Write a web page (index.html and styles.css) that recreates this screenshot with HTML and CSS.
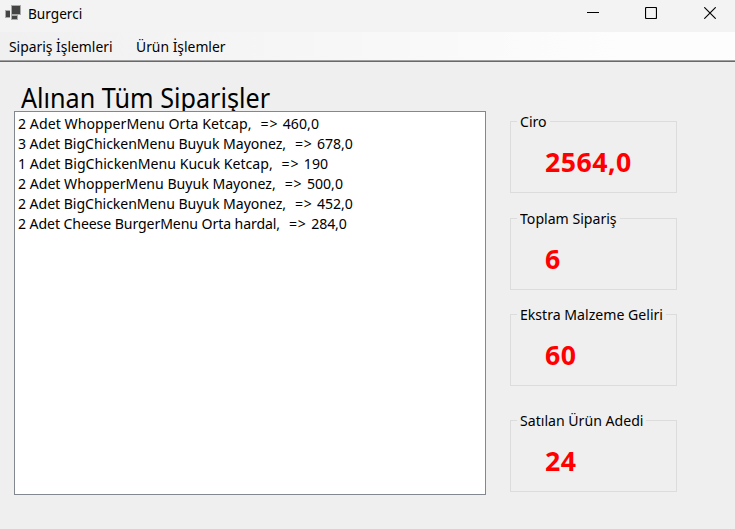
FILE: index.html
```html
<!DOCTYPE html>
<html lang="tr">
<head>
<meta charset="utf-8">
<title>Burgerci</title>
<link rel="stylesheet" href="styles.css">
</head>
<body>
<header class="titlebar">
  <svg class="app-icon" width="16" height="16" viewBox="0 0 16 16" shape-rendering="crispEdges">
    <g fill="#aaa"><path d="M0 5h5v8H0zM6 0h10v10H6zM6 10h7v5H6z"/></g>
    <g fill="#444"><path d="M1 6h4v6H1zM7 1h8v8H7zM7 11h5v3H7z"/></g>
  </svg>
  <span class="app-name"><span class="fit">Burgerci</span></span>
  <div class="controls">
    <svg width="12" height="12" viewBox="0 0 12 12"><path d="M0 5.5h12" stroke="#000"/></svg>
    <svg width="12" height="12" viewBox="0 0 12 12"><rect x=".5" y=".5" width="11" height="11" rx="1" fill="none" stroke="#000" stroke-width="1.2"/></svg>
    <svg width="12" height="12" viewBox="0 0 12 12"><path d="M.3.3l11.4 11.4M11.7.3L.3 11.7" stroke="#000" stroke-width="1.15"/></svg>
  </div>
</header>
<nav class="menubar">
  <span class="menu-item first"><span class="fit">Sipariş İşlemleri</span></span>
  <span class="menu-item"><span class="fit">Ürün İşlemler</span></span>
</nav>
<main class="form">
  <section class="orders">
    <h1><span class="fit">Alınan Tüm Siparişler</span></h1>
    <ul class="listbox">
      <li class="loose"><span class="fit">2 Adet WhopperMenu Orta Ketcap,<i>  =&gt; </i>460,0</span></li>
      <li class="tight"><span class="fit">3 Adet BigChickenMenu Buyuk Mayonez,<i>  =&gt; </i>678,0</span></li>
      <li><span class="fit">1 Adet BigChickenMenu Kucuk Ketcap,<i>  =&gt; </i>190</span></li>
      <li><span class="fit">2 Adet WhopperMenu Buyuk Mayonez,<i>  =&gt; </i>500,0</span></li>
      <li class="tight"><span class="fit">2 Adet BigChickenMenu Buyuk Mayonez,<i>  =&gt; </i>452,0</span></li>
      <li class="tighter"><span class="fit">2 Adet Cheese BurgerMenu Orta hardal,<i>  =&gt; </i>284,0</span></li>
    </ul>
  </section>
  <aside class="stats">
    <fieldset class="group g1"><legend><span class="fit">Ciro</span></legend><strong>2564,0</strong></fieldset>
    <fieldset class="group g2"><legend><span class="fit">Toplam Sipariş</span></legend><strong>6</strong></fieldset>
    <fieldset class="group g3"><legend><span class="fit">Ekstra Malzeme Geliri</span></legend><strong>60</strong></fieldset>
    <fieldset class="group g4"><legend><span class="fit">Satılan Ürün Adedi</span></legend><strong>24</strong></fieldset>
  </aside>
</main>
</body>
</html>
```
FILE: styles.css
```css
* { box-sizing: border-box; margin: 0; padding: 0; }
body {
  width: 735px; height: 529px; overflow: hidden;
  background: #efefef; color: #000;
  font: 15px/20px "Noto Sans", "Open Sans", sans-serif;
}
.fit { display: inline-block; white-space: pre; transform-origin: 0 50%; transform: scaleX(.94); }
.titlebar { height: 32px; display: flex; align-items: flex-start; background: #f3f3f3; padding: 3px 19px 0 5px; }
.app-icon { flex: none; margin: 2px 7px 0 0; }
.app-name { font-size: 14.5px; }
.controls { margin: 4px 0 0 auto; display: flex; gap: 46px; }
.controls svg { display: block; }
.controls svg:last-child { margin-left: 1px; }
.menubar {
  height: 30px; display: flex; padding: 4px 0 0 9px;
  background: linear-gradient(90deg, #f0f0f0, #fdfdfd 85%);
  border-bottom: 1px solid #69696b; box-shadow: inset 0 -1px #a0a0a0;
}
.menu-item .fit { transform: scaleX(.925); }
.menu-item.first { width: 127px; }
.form { display: flex; padding-left: 14px; }
.orders { width: 472px; }
h1 { height: 49px; padding: 18px 0 0 7px; font-size: 26.67px; font-weight: 400; line-height: 36px; }
h1 .fit { transform: scaleX(.944); }
.listbox { position: relative; height: 384px; border: 1px solid #828790; background: #fff; padding: 1px 3px; list-style: none; }
.listbox i { font-style: normal; letter-spacing: .85px; }
.loose { letter-spacing: .06px; }
.tight { letter-spacing: -.06px; }
.tighter { letter-spacing: -.1px; }
.stats { padding: 49px 0 0 24px; }
.group { width: 167px; height: 82px; border: 1px solid #dcdcdc; padding: 0 0 0 34px; }
.group legend { margin-left: -28px; padding: 0 3px; line-height: 20px; white-space: nowrap; }
.group strong { display: block; color: #f00; font-size: 26.67px; line-height: 36px; padding-top: 13px; letter-spacing: .5px; }
.g1 .fit { margin-right: -1px; }
.g2 { margin-top: 15px; }
.g2 .fit { margin-right: -6px; }
.g3 { margin-top: 14px; }
.g3 .fit { margin-right: -9px; }
.g4 { margin-top: 24px; }
.g4 .fit { margin-right: -8px; }
```
